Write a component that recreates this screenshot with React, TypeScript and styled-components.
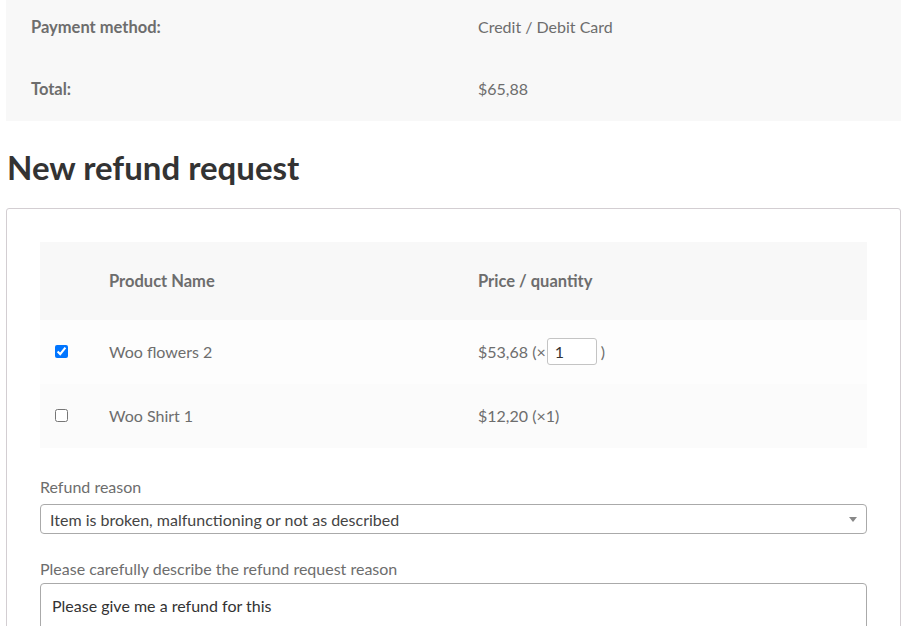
import React from "react";
import styled, { createGlobalStyle } from "styled-components";

const GlobalStyle = createGlobalStyle`
  html, body {
    margin: 0;
    padding: 0;
    background: #ffffff;
  }
  body {
    font-family: "Lato", "Liberation Sans", sans-serif;
    font-size: 16px;
    color: #6d6d6d;
  }
  * {
    box-sizing: border-box;
  }
`;

const Page = styled.div`
  padding: 0 6px;
  overflow: hidden;
  height: 626px;
`;

const SummaryTable = styled.div`
  background: #f8f8f8;
  display: flex;
  flex-direction: column;
`;

const SummaryRow = styled.div<{ $height: number; $pad: number }>`
  display: grid;
  grid-template-columns: 472px 1fr;
  align-items: center;
  height: ${(p) => p.$height}px;
  padding-bottom: ${(p) => p.$pad}px;
`;

const SummaryLabel = styled.div`
  padding-left: 25px;
  font-weight: 700;
  font-size: 16.5px;
`;

const SummaryValue = styled.div``;

const Heading = styled.h2`
  margin: 26px 0 20px 1px;
  font-size: 33px;
  line-height: 41px;
  font-weight: 700;
  color: #333333;
`;

const FormBox = styled.div`
  border: 1px solid #d3ced2;
  border-radius: 3px;
  padding: 33px 33px 40px 33px;
`;

const ItemsTable = styled.div`
  display: flex;
  flex-direction: column;
`;

const ItemRow = styled.div<{ $bg: string; $height: number; $pad: number }>`
  display: grid;
  grid-template-columns: 69px 369px 1fr;
  align-items: center;
  height: ${(p) => p.$height}px;
  padding-bottom: ${(p) => p.$pad}px;
  background: ${(p) => p.$bg};
`;

const HeadCell = styled.div`
  font-weight: 700;
  font-size: 16.5px;
`;

const CheckCell = styled.div`
  padding-left: 15px;
  display: flex;
  align-items: center;

  input {
    margin: 0;
    width: 13px;
    height: 13px;
  }
`;

const Cell = styled.div`
  display: flex;
  align-items: center;
`;

const QtyInput = styled.input`
  width: 50px;
  height: 27px;
  margin: 0 4px 0 1px;
  padding: 0 7px;
  border: 1px solid #c4c4c4;
  border-radius: 3px;
  font-family: inherit;
  font-size: 16px;
  color: #333333;
  background: #ffffff;
`;

const Field = styled.div<{ $top: number; $gap: number }>`
  display: flex;
  flex-direction: column;
  margin-top: ${(p) => p.$top}px;

  label {
    margin-bottom: ${(p) => p.$gap}px;
  }
`;

const Label = styled.label`
  line-height: 24px;
`;

const SelectBox = styled.div`
  display: flex;
  align-items: center;
  justify-content: space-between;
  height: 30px;
  padding: 0 9px;
  border: 1px solid #aaaaaa;
  border-radius: 4px;
  color: #444444;
  background: #ffffff;
`;

const Caret = styled.span`
  width: 0;
  height: 0;
  border-left: 4px solid transparent;
  border-right: 4px solid transparent;
  border-top: 5px solid #888888;
  margin-top: 1px;
`;

const TextArea = styled.textarea`
  height: 80px;
  padding: 10px 11px;
  border: 1px solid #aaaaaa;
  border-radius: 4px;
  font-family: inherit;
  font-size: 16px;
  line-height: 24px;
  color: #333333;
  resize: none;
`;

export default function App() {
  const items = [
    { name: "Woo flowers 2", price: "$53,68", qty: 1, checked: true, editable: true },
    { name: "Woo Shirt 1", price: "$12,20", qty: 1, checked: false, editable: false },
  ];

  return (
    <>
      <GlobalStyle />
      <Page>
        <SummaryTable>
          <SummaryRow $height={57} $pad={4}>
            <SummaryLabel>Payment method:</SummaryLabel>
            <SummaryValue>Credit / Debit Card</SummaryValue>
          </SummaryRow>
          <SummaryRow $height={64} $pad={1}>
            <SummaryLabel>Total:</SummaryLabel>
            <SummaryValue>$65,88</SummaryValue>
          </SummaryRow>
        </SummaryTable>

        <Heading>New refund request</Heading>

        <FormBox>
          <ItemsTable>
            <ItemRow $bg="#f8f8f8" $height={78} $pad={0}>
              <div />
              <HeadCell>Product Name</HeadCell>
              <HeadCell>Price / quantity</HeadCell>
            </ItemRow>
            {items.map((item, idx) => (
              <ItemRow
                key={idx}
                $bg={idx % 2 === 0 ? "#fdfdfd" : "#fbfbfb"}
                $height={64}
                $pad={2}
              >
                <CheckCell>
                  <input type="checkbox" defaultChecked={item.checked} />
                </CheckCell>
                <Cell>{item.name}</Cell>
                <Cell>
                  {item.editable ? (
                    <>
                      {item.price} (×
                      <QtyInput type="text" defaultValue={item.qty} />)
                    </>
                  ) : (
                    `${item.price} (×${item.qty})`
                  )}
                </Cell>
              </ItemRow>
            ))}
          </ItemsTable>

          <Field $top={27} $gap={5}>
            <Label>Refund reason</Label>
            <SelectBox>
              <span>Item is broken, malfunctioning or not as described</span>
              <Caret />
            </SelectBox>
          </Field>
          <Field $top={23} $gap={2}>
            <Label>Please carefully describe the refund request reason</Label>
            <TextArea defaultValue="Please give me a refund for this" />
          </Field>
        </FormBox>
      </Page>
    </>
  );
}
